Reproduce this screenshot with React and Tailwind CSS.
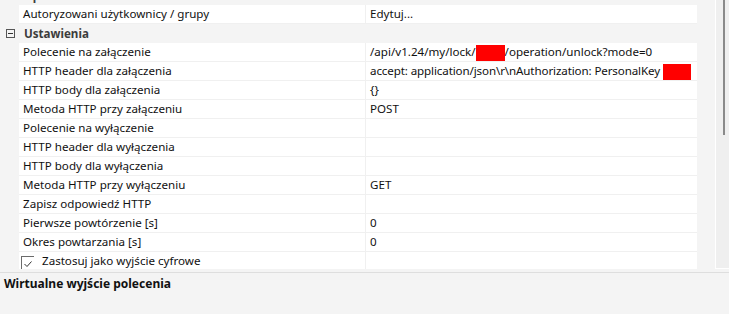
import React from "react";

const redBox = (w) => (
  <span className="inline-block bg-[#ff0000] h-[16px] align-middle" style={{ width: w }} />
);

function PropRow({ name, value, check }) {
  return (
    <div className="flex h-[19px] shrink-0">
      <div className="w-[19px] shrink-0" />
      <div className="flex flex-1 bg-white border-b border-[#f0f0f0]">
        <div className="w-[347px] shrink-0 flex items-center pl-[4px] border-r border-[#f0f0f0] whitespace-nowrap overflow-hidden">
          {check ? (
            <div className="flex items-center">
              <div className="w-[13px] h-[14px] mt-[4px] ml-[-2px] border-l border-t border-[#6b6b6b] flex items-center justify-center">
                <svg width="10" height="8" viewBox="0 0 10 8">
                  <path d="M1.5 4 L4 6.5 L8.5 1.5" fill="none" stroke="#333" strokeWidth="1" />
                </svg>
              </div>
              <span className="ml-[8px]">{name}</span>
            </div>
          ) : (
            name
          )}
        </div>
        <div className="flex-1 flex items-center pl-[4px] whitespace-nowrap overflow-hidden">{value}</div>
      </div>
    </div>
  );
}

function CatRow({ name }) {
  return (
    <div className="flex h-[19px] shrink-0 items-center">
      <div className="w-[19px] shrink-0 flex items-center justify-center">
        <div className="w-[9px] h-[9px] border border-[#555] flex items-center justify-center ml-[1px]">
          <div className="w-[5px] h-[1px] bg-[#333]" />
        </div>
      </div>
      <div className="pl-[5px] font-bold text-[#3c3c3c]">{name}</div>
    </div>
  );
}

export default function App() {
  const rows = [
    ["Polecenie na załączenie", <span>/api/v1.24/my/lock/{redBox(29)}/operation/unlock?mode=0</span>],
    ["HTTP header dla załączenia", <span className="tracking-[-0.12px]">accept: application/json\r\nAuthorization: PersonalKey {redBox(28)}</span>],
    ["HTTP body dla załączenia", "{}"],
    ["Metoda HTTP przy załączeniu", "POST"],
    ["Polecenie na wyłączenie", ""],
    ["HTTP header dla wyłączenia", ""],
    ["HTTP body dla wyłączenia", ""],
    ["Metoda HTTP przy wyłączeniu", "GET"],
    ["Zapisz odpowiedź HTTP", ""],
    ["Pierwsze powtórzenie [s]", "0"],
    ["Okres powtarzania [s]", "0"],
  ];
  return (
    <div className="w-[729px] h-[314px] bg-[#f4f4f4] overflow-hidden flex flex-col text-[11.6px] text-[#111] font-['Segoe_UI','Noto_Sans',sans-serif]">
      <div className="h-[272px] shrink-0 flex">
        <div className="w-[697px] h-[269px] overflow-hidden flex flex-col">
          <div className="mt-[-14px]">
            <CatRow name="Uprawnienia" />
          </div>
          <PropRow name="Autoryzowani użytkownicy / grupy" value="Edytuj..." />
          <CatRow name="Ustawienia" />
          {rows.map(([n, v], i) => (
            <PropRow key={i} name={n} value={v} />
          ))}
          <PropRow name="Zastosuj jako wyjście cyfrowe" value="" check />
        </div>
        <div className="w-[18px]" />
        <div className="w-[14px] h-[269px] border-l border-b border-white bg-[#efefef] relative">
          <div className="absolute left-[7px] top-0 w-[2px] h-[135px] bg-[#8a8a8a]" />
        </div>
      </div>
      <div className="h-[1px] bg-[#dedede]" />
      <div className="flex-1 px-[4px] pt-[2px] text-[12px] font-bold text-[#111]">Wirtualne wyjście polecenia</div>
    </div>
  );
}
